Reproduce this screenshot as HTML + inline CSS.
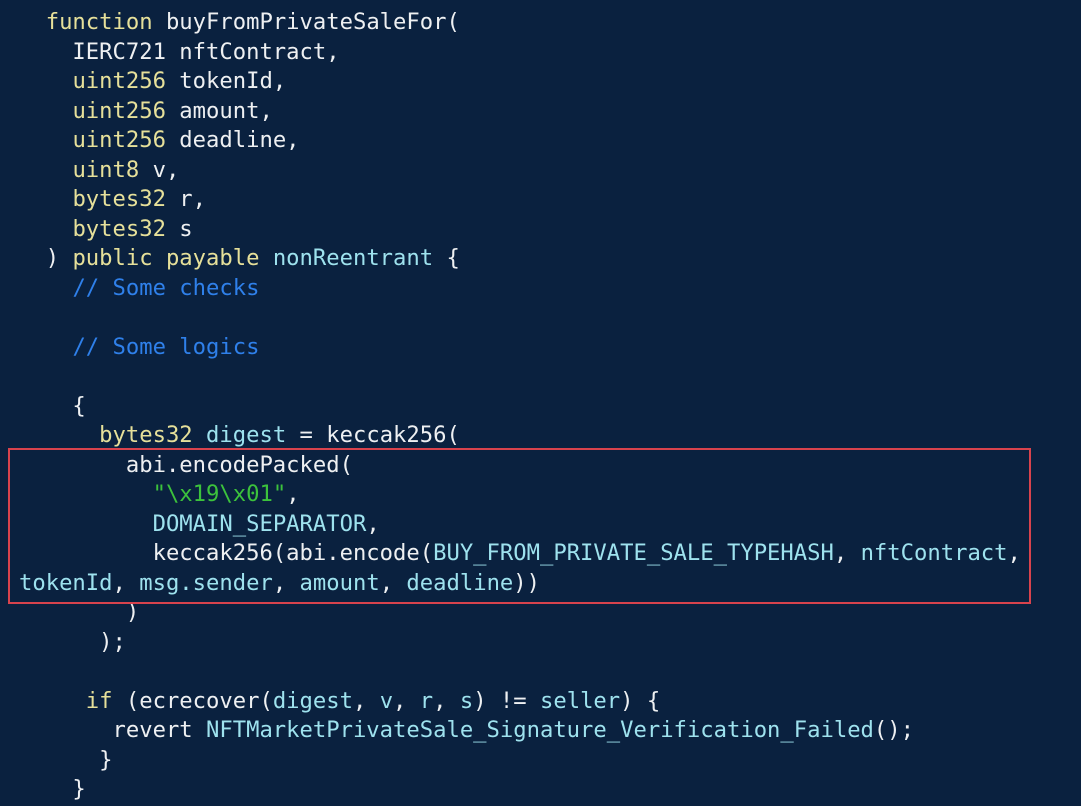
<!DOCTYPE html>
<html><head><meta charset="utf-8"><style>
html,body{margin:0;padding:0;width:1081px;height:806px;overflow:hidden;background:#0a213f;}
pre{margin:0;position:absolute;left:19px;top:8px;font-family:"DejaVu Sans Mono","Liberation Mono",monospace;font-size:22.2px;line-height:29.5px;color:#eef0f2;white-space:pre;}
.k{color:#e6e09a}.c{color:#9ee2ee}.m{color:#2f80ea}.s{color:#3cc23c}
.box{position:absolute;left:8px;top:448px;width:1019px;height:152px;border:2px solid #d8434d;}
</style></head><body>
<pre>  <span class="k">function</span> buyFromPrivateSaleFor(
    IERC721 nftContract,
    <span class="k">uint256</span> tokenId,
    <span class="k">uint256</span> amount,
    <span class="k">uint256</span> deadline,
    <span class="k">uint8</span> v,
    <span class="k">bytes32</span> r,
    <span class="k">bytes32</span> s
  ) <span class="k">public payable</span> <span class="c">nonReentrant</span> {
    <span class="m">// Some checks</span>

    <span class="m">// Some logics</span>

    {
      <span class="k">bytes32</span> <span class="c">digest</span> = keccak256(
        abi.encodePacked(
          <span class="s">"\x19\x01"</span>,
          <span class="c">DOMAIN_SEPARATOR</span>,
          keccak256(abi.encode(<span class="c">BUY_FROM_PRIVATE_SALE_TYPEHASH</span>, <span class="c">nftContract</span>,
<span class="c">tokenId</span>, <span class="c">msg.sender</span>, <span class="c">amount</span>, <span class="c">deadline</span>))
        )
      );

     <span class="k">if</span> (ecrecover(<span class="c">digest</span>, <span class="c">v</span>, <span class="c">r</span>, <span class="c">s</span>) != <span class="c">seller</span>) {
       revert <span class="c">NFTMarketPrivateSale_Signature_Verification_Failed</span>();
      }
    }</pre>
<div class="box"></div>
</body></html>
